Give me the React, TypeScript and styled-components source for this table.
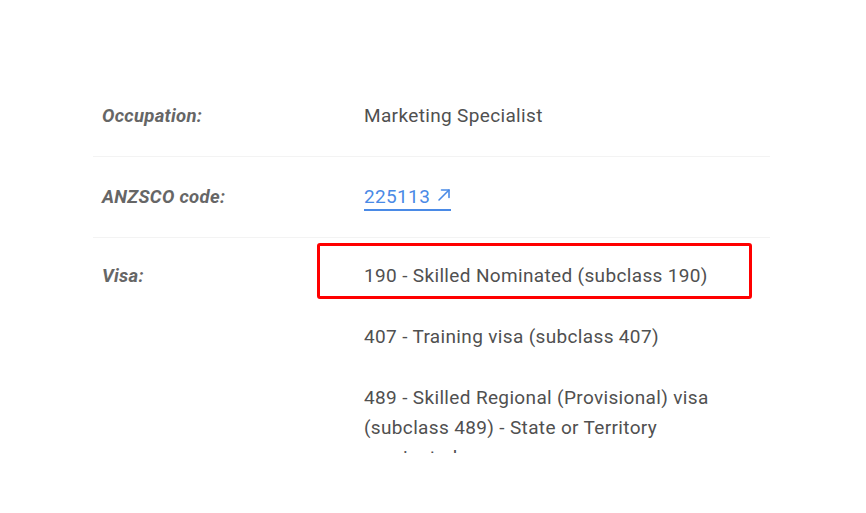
import React from 'react';
import styled, {createGlobalStyle} from 'styled-components';

const Global = createGlobalStyle`
    html, body {
        margin: 0;
        padding: 0;
        background: #fff;
    }
    body {
        font-family: Roboto, "Liberation Sans", Arial, sans-serif;
    }
`

const Frame = styled.div`
    height: 453px;
    overflow: hidden;
    padding: 76px 96px 0 93px;
    box-sizing: border-box;
`

const Row = styled.div<{ $last?: boolean }>`
    display: grid;
    grid-template-columns: 271px 1fr;
    padding: ${p => p.$last ? '23px 0 0' : '25px 0'};
    border-bottom: ${p => p.$last ? 'none' : '1px solid #f3f3f3'};
`

const Label = styled.div`
    padding-left: 9px;
    font-size: 18.5px;
    line-height: 30px;
    font-weight: 700;
    font-style: italic;
    letter-spacing: 0.3px;
    color: #666;
`

const Value = styled.div`
    font-size: 19px;
    line-height: 30px;
    letter-spacing: 0.35px;
    color: #505050;
    max-width: 370px;
`

const VisaList = styled.div`
    display: flex;
    flex-direction: column;
    gap: 31px;
`

const VisaItem = styled.div`
    position: relative;
`

const Highlight = styled.span`
    position: absolute;
    left: -47px;
    top: -18px;
    width: 435px;
    height: 56px;
    border: 3px solid #ff0000;
    border-radius: 3px;
    box-sizing: border-box;
    pointer-events: none;
`

const CodeLink = styled.a`
    display: inline-flex;
    align-items: center;
    gap: 7px;
    color: #4a8ae6;
    text-decoration: none;
    border-bottom: 2px solid #4a8ae6;
    line-height: 24px;
    svg {
        width: 14px;
        height: 14px;
        margin-top: -4px;
    }
`

const visas = [
    '190 - Skilled Nominated (subclass 190)',
    '407 - Training visa (subclass 407)',
    '489 - Skilled Regional (Provisional) visa (subclass 489) - State or Territory nominated',
]

const App: React.FC = () => {
    return (
        <>
            <Global />
            <Frame>
                <Row>
                    <Label>Occupation:</Label>
                    <Value>Marketing Specialist</Value>
                </Row>
                <Row>
                    <Label>ANZSCO code:</Label>
                    <Value>
                        <CodeLink href="#">
                            225113
                            <svg viewBox="0 0 14 14" fill="none" stroke="currentColor" strokeWidth="1.6" strokeLinecap="round" strokeLinejoin="round">
                                <path d="M2 12 L12 2" />
                                <path d="M4.5 2 H12 V9.5" />
                            </svg>
                        </CodeLink>
                    </Value>
                </Row>
                <Row $last>
                    <Label>Visa:</Label>
                    <Value>
                        <VisaList>
                            {visas.map((v, i) => (
                                <VisaItem key={v}>
                                    {i === 0 && <Highlight />}
                                    {v}
                                </VisaItem>
                            ))}
                        </VisaList>
                    </Value>
                </Row>
            </Frame>
        </>
    )
}

export default App
